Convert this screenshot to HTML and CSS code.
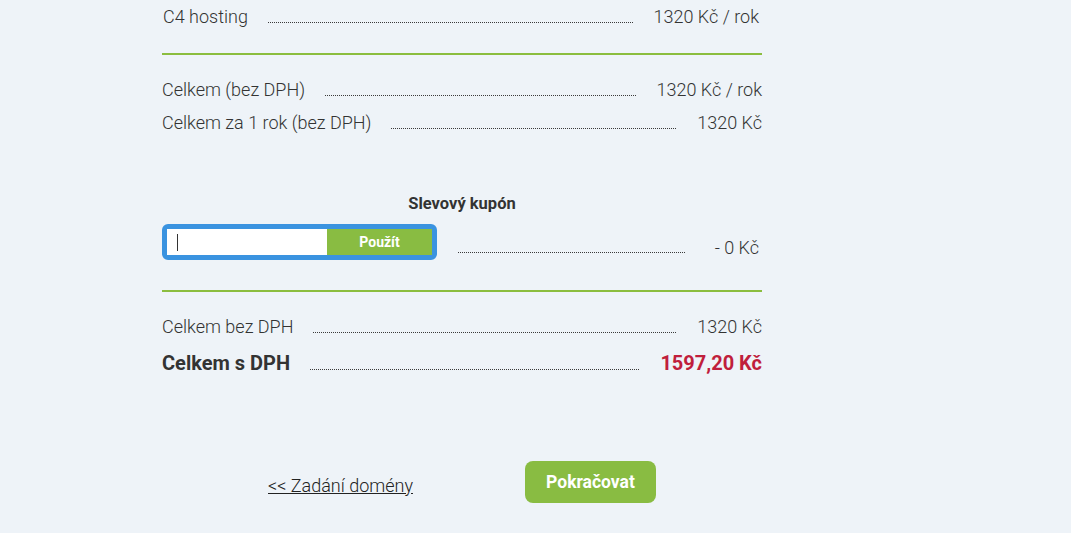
FILE: index.html
```html
<!DOCTYPE html>
<html lang="cs">
<head>
<meta charset="utf-8">
<title>Objednávka</title>
<link rel="stylesheet" href="styles.css">
</head>
<body>
<div class="summary">
  <div class="row first">
    <span class="label">C4 hosting</span>
    <span class="leader"></span>
    <span class="value">1320 Kč / rok</span>
  </div>
  <hr class="sep">
  <div class="row r2">
    <span class="label">Celkem (bez DPH)</span>
    <span class="leader"></span>
    <span class="value">1320 Kč / rok</span>
  </div>
  <div class="row">
    <span class="label">Celkem za 1 rok (bez DPH)</span>
    <span class="leader"></span>
    <span class="value">1320 Kč</span>
  </div>

  <div class="coupon">
    <div class="coupon-title">Slevový kupón</div>
    <div class="coupon-row">
      <div class="coupon-box">
        <div class="coupon-input"><span class="caret"></span></div>
        <button class="coupon-btn" type="button">Použít</button>
      </div>
      <span class="leader"></span>
      <span class="value discount">- 0 Kč</span>
    </div>
  </div>
  <hr class="sep sep2">
  <div class="row r3">
    <span class="label">Celkem bez DPH</span>
    <span class="leader"></span>
    <span class="value">1320 Kč</span>
  </div>
  <div class="row total">
    <span class="label">Celkem s DPH</span>
    <span class="leader"></span>
    <span class="value price">1597,20 Kč</span>
  </div>

  <div class="actions">
    <a class="back" href="#">&lt;&lt; Zadání domény</a>
    <button class="next" type="button">Pokračovat</button>
  </div>
</div>
</body>
</html>
```

FILE: styles.css
```css
*, *::before, *::after {
  box-sizing: border-box;
}
html, body {
  margin: 0;
  padding: 0;
  background: #eef3f8;
}
body {
  font-family: Roboto, "Liberation Sans", sans-serif;
  color: #333;
  height: 533px;
  overflow: hidden;
}
.summary {
  width: 600px;
  margin-left: 162px;
  padding-top: 5px;
}
.row {
  display: flex;
  align-items: baseline;
  font-size: 18px;
  font-weight: 300;
  height: 33px;
  line-height: 24px;
}
.row.first {
  padding-left: 1px;
  padding-right: 3px;
}
.label {
  white-space: nowrap;
}
.leader {
  flex: 1;
  border-bottom: 1px dotted #3a3a3a;
  margin: 0 21px 0 20px;
}
.value {
  white-space: nowrap;
}
.sep {
  border: 0;
  height: 2px;
  background: #8bbd3f;
  margin: 15px 0 0;
}
.r2 {
  margin-top: 23px;
}
.coupon {
  margin-top: 48px;
}
.coupon-title {
  text-align: center;
  font-weight: 700;
  font-size: 16.5px;
  color: #333;
  height: 32px;
  line-height: 24px;
}
.coupon-row {
  display: flex;
  align-items: center;
  font-size: 18px;
  font-weight: 300;
}
.coupon-row .leader {
  margin: 20px 30px 0 21px;
}
.coupon-row .value {
  padding-right: 3px;
  margin-top: 10px;
}
.coupon-box {
  display: flex;
  width: 275px;
  height: 36px;
  border: 5px solid #3a93e0;
  border-radius: 6px;
  background: #fff;
}
.coupon-input {
  flex: 0 0 160px;
  display: flex;
  align-items: center;
  padding-left: 10px;
  background: #fff;
}
.caret {
  width: 1px;
  height: 17px;
  background: #333;
}
.coupon-btn {
  flex: 1;
  border: 0;
  margin: 0;
  padding: 0;
  background: #89bc42;
  color: #fff;
  font-family: Roboto, "Liberation Sans", sans-serif;
  font-weight: 700;
  font-size: 14px;
}
.sep2 {
  margin-top: 30px;
}
.r3 {
  margin-top: 23px;
}
.total {
  font-weight: 700;
  font-size: 20px;
  height: 40px;
  line-height: 30px;
}
.price {
  color: #c01e3c;
}
.actions {
  display: flex;
  align-items: center;
  margin-top: 73px;
}
.back {
  margin-left: 106px;
  color: #222;
  font-size: 18px;
  font-weight: 300;
  text-decoration: underline;
  margin-top: 6px;
}
.next {
  margin-left: 112px;
  width: 131px;
  height: 42px;
  border: 0;
  border-radius: 8px;
  background: #89bc42;
  color: #fff;
  font-family: Roboto, "Liberation Sans", sans-serif;
  font-weight: 700;
  font-size: 17.5px;
}
```
